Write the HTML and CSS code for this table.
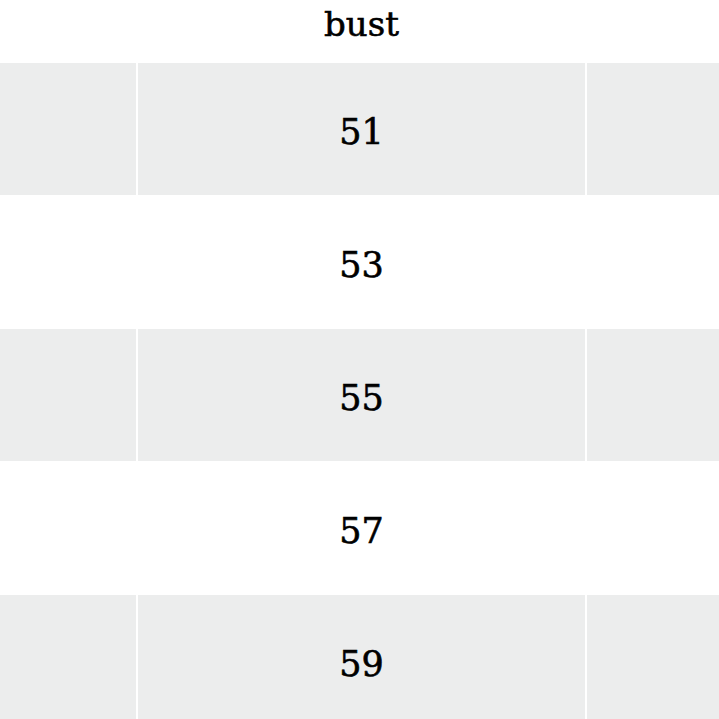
FILE: index.html
```html
<!DOCTYPE html>
<html>
<head>
<meta charset="utf-8">
<link rel="stylesheet" href="styles.css">
</head>
<body>
<div class="table">
  <div class="head"></div>
  <div class="head">bust</div>
  <div class="head"></div>

  <div class="cell gray"></div>
  <div class="cell gray">51</div>
  <div class="cell gray"></div>

  <div class="cell"></div>
  <div class="cell">53</div>
  <div class="cell"></div>

  <div class="cell gray"></div>
  <div class="cell gray">55</div>
  <div class="cell gray"></div>

  <div class="cell"></div>
  <div class="cell">57</div>
  <div class="cell"></div>

  <div class="cell gray"></div>
  <div class="cell gray">59</div>
  <div class="cell gray"></div>
</div>
</body>
</html>
```
FILE: styles.css
```css
html, body {
  margin: 0;
  padding: 0;
  background: #ffffff;
  overflow: hidden;
}
.table {
  display: grid;
  grid-template-columns: 136px 447px 1fr;
  grid-template-rows: 63px 132px 134px 132px 134px 132px;
  column-gap: 2px;
  font-family: "DejaVu Serif", serif;
  color: #000;
  -webkit-text-stroke: 0.6px #000;
}
.head {
  font-size: 34px;
  text-align: center;
  line-height: 48px;
}
.cell {
  font-size: 35px;
  display: flex;
  align-items: center;
  justify-content: center;
  padding-top: 5px;
}
.gray {
  background: #eceded;
}
```
